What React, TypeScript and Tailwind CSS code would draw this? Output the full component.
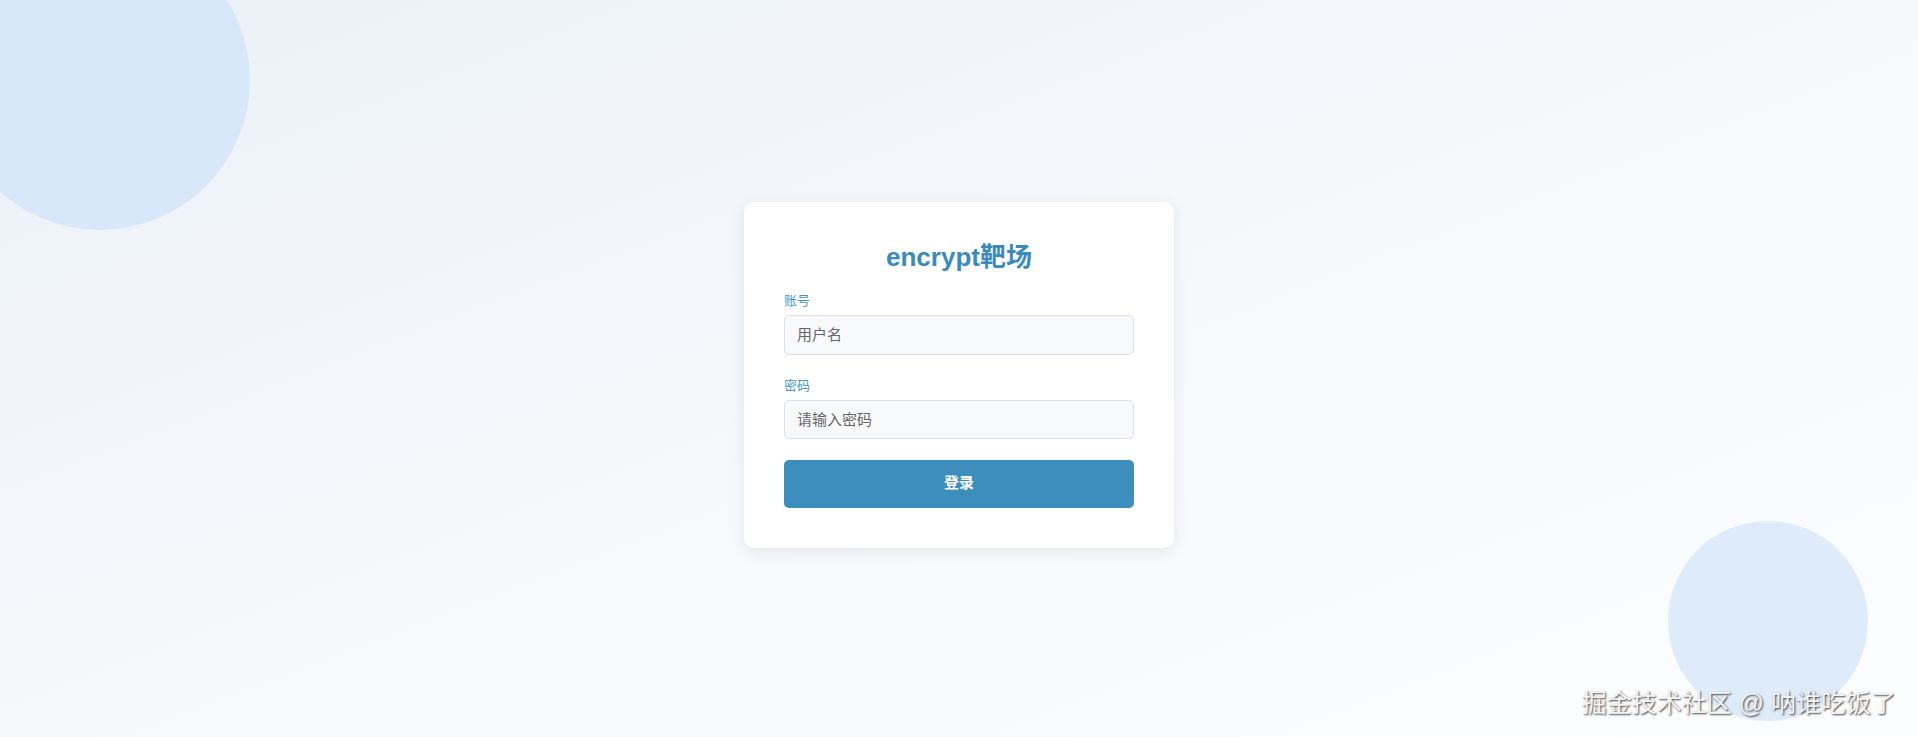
const App = () => {
  return (
    <div
      className="relative w-full h-[737px] overflow-hidden bg-gradient-to-br from-[#ebf1f8] via-[#f6f8fb] to-[#fcfdfe] flex items-center justify-center"
      style={{ fontFamily: '"Liberation Sans", "Noto Sans CJK SC", sans-serif' }}
    >
      {/* decorative circles */}
      <div className="absolute left-[-50px] top-[-70px] w-[300px] h-[300px] rounded-full bg-[#d8e8fa]" />
      <div className="absolute left-[1668px] top-[521px] w-[200px] h-[200px] rounded-full bg-[#deebfb]" />

      <div className="relative w-[430px] bg-white rounded-[10px] shadow-[0_4px_16px_rgba(0,0,0,0.08)] p-10 mt-[12px]">
        <h1 className="text-center text-[26px] leading-[30px] font-bold text-[#3a8bbd]">
          encrypt靶场
        </h1>

        <form className="mt-[20px] flex flex-col" onSubmit={(e) => e.preventDefault()}>
          <label className="text-[13px] leading-[18px] text-[#4595c4]">账号</label>
          <input
            type="text"
            placeholder="用户名"
            className="mt-[5px] h-10 w-full rounded-[5px] border border-[#dcdfe6] bg-[#f8f9fb] px-3 text-[15px] text-[#444] placeholder:text-[#666] outline-none"
          />

          <label className="mt-[22px] text-[13px] leading-[18px] text-[#4595c4]">密码</label>
          <input
            type="password"
            placeholder="请输入密码"
            className="mt-[5px] h-[39px] w-full rounded-[5px] border border-[#dcdfe6] bg-[#f8f9fb] px-3 text-[15px] text-[#444] placeholder:text-[#666] outline-none"
          />

          <button
            type="submit"
            className="mt-[21px] h-12 w-full rounded-[5px] bg-[#3d8dbd] text-white text-[15px] font-bold"
          >
            登录
          </button>
        </form>
      </div>

      {/* watermark */}
      <div className="absolute right-[22px] bottom-[19px] text-[25px] leading-[30px] text-[#f4f4f4] [text-shadow:1px_1px_2px_rgba(0,0,0,0.75)]">
        掘金技术社区 @ 呐谁吃饭了
      </div>
    </div>
  );
};

export default App;
